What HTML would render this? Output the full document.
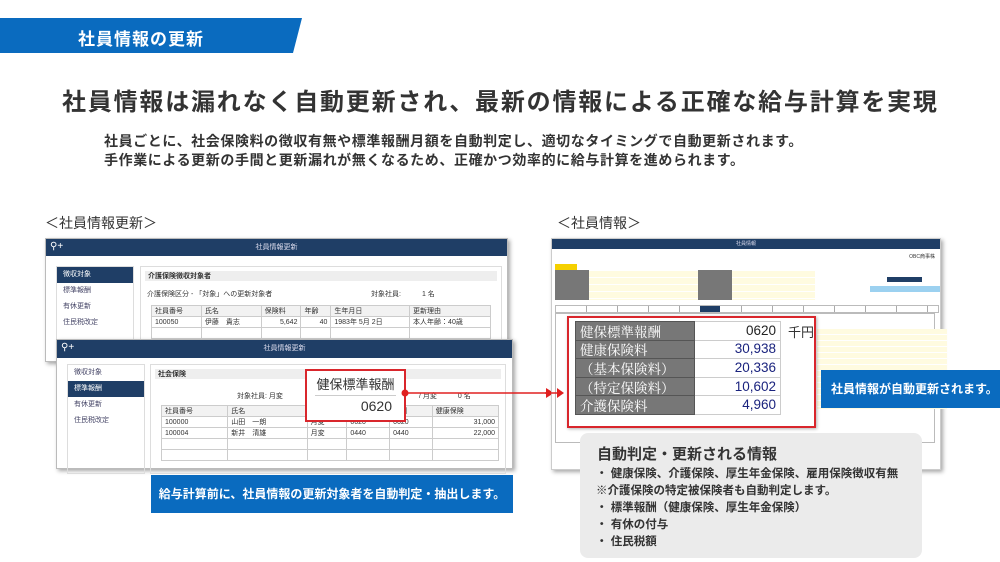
<!DOCTYPE html>
<html><head><meta charset="utf-8"><style>
*{margin:0;padding:0;box-sizing:border-box}
body{width:1000px;height:562px;background:#fff;position:relative;overflow:hidden;font-family:"Liberation Sans","Noto Sans CJK JP",sans-serif;color:#333}
.a{position:absolute;white-space:nowrap}
.win{position:absolute;background:#fff;border:1px solid #bbb;box-shadow:2px 2px 4px rgba(0,0,0,.35)}
.hb{position:absolute;left:0;right:0;top:0;background:#1f3e66;color:#dde;font-size:7px;text-align:center}
.side{position:absolute;border:1px solid #ddd;font-size:7px;color:#446}
.side div{height:16px;line-height:16px;padding-left:6px}
.side .on{background:#1f3e66;color:#fff}
.t{font-size:7px;color:#333}
.gr td{border:1px solid #ccc;font-size:7px;height:11px;padding:0 3px}
.rt td{height:18.6px;font-size:13.5px;line-height:16px;padding:0 4px;box-sizing:border-box}
.rt .l{background:#777;color:#fff;width:119px;border:1px solid #555;font-family:"Noto Serif CJK SC",serif}
.rt .v{background:#fff;text-align:right;color:#1a237e;width:86px;border:1px solid #ccc}
</style></head><body>
<svg class="a" style="left:0;top:0" width="310" height="60"><polygon points="0,18 302,18 293,53 0,53" fill="#0a6bbf"/></svg>
<div class="a" style="left:78px;top:25px;color:#fff;font-size:17px;font-weight:bold;letter-spacing:1px">社員情報の更新</div>
<div class="a" style="left:62px;top:82px;font-size:24px;font-weight:bold;letter-spacing:1.8px;color:#333">社員情報は漏れなく自動更新され、最新の情報による正確な給与計算を実現</div>
<div class="a" style="left:104px;top:132px;font-size:14px;line-height:19px;letter-spacing:0.6px;font-weight:bold;color:#333">社員ごとに、社会保険料の徴収有無や標準報酬月額を自動判定し、適切なタイミングで自動更新されます。<br>手作業による更新の手間と更新漏れが無くなるため、正確かつ効率的に給与計算を進められます。</div>
<div class="a" style="left:45px;top:213px;font-size:14px">＜社員情報更新＞</div>
<div class="a" style="left:557px;top:213px;font-size:14px">＜社員情報＞</div>

<div class="win" style="left:45px;top:238px;width:463px;height:124px">
<div class="hb" style="height:17px;line-height:17px">社員情報更新</div>
<div class="a" style="left:4px;top:2px;color:#fff;font-size:10px">⚲+</div>
<div class="side" style="left:10px;top:27px;width:78px;height:100px"><div class="on">徴収対象</div><div>標準報酬</div><div>有休更新</div><div>住民税改定</div></div>
<div class="a" style="left:94px;top:27px;width:362px;height:100px;border:1px solid #ddd">
<div style="background:#eee;margin:4px;height:10px;font-size:7px;font-weight:bold;padding-left:3px">介護保険徴収対象者</div>
<div class="a t" style="left:6px;top:22px">介護保険区分 - 「対象」への更新対象者</div><div class="a t" style="left:230px;top:22px">対象社員:　　　1 名</div>
<table class="gr a" style="left:10px;top:38px;width:340px;border-collapse:collapse"><tr style="background:#f2f2f2"><td>社員番号</td><td>氏名</td><td>保険料</td><td>年齢</td><td>生年月日</td><td>更新理由</td></tr><tr><td>100050</td><td>伊藤　貴志</td><td style="text-align:right">5,642</td><td style="text-align:right">40</td><td>1983年 5月 2日</td><td>本人年齢：40歳</td></tr><tr><td></td><td></td><td></td><td></td><td></td><td></td></tr></table>
</div></div>

<div class="win" style="left:56px;top:339px;width:457px;height:130px">
<div class="hb" style="height:18px;line-height:18px">社員情報更新</div>
<div class="a" style="left:4px;top:2px;color:#fff;font-size:10px">⚲+</div>
<div class="side" style="left:10px;top:24px;width:78px;height:110px"><div>徴収対象</div><div class="on">標準報酬</div><div>有休更新</div><div>住民税改定</div></div>
<div class="a" style="left:93px;top:24px;width:356px;height:110px;border:1px solid #ddd">
<div style="background:#eee;margin:4px;height:10px;font-size:7px;font-weight:bold;padding-left:3px">社会保険</div>
<div class="a t" style="left:86px;top:26px">対象社員: 月変</div><div class="a t" style="left:268px;top:26px">/ 月変　　　0 名</div>
<table class="gr a" style="left:10px;top:40px;width:338px;border-collapse:collapse"><tr style="background:#f2f2f2"><td>社員番号</td><td>氏名</td><td></td><td></td><td>報酬</td><td>健康保険</td></tr><tr><td>100000</td><td>山田　一朗</td><td>月変</td><td>0620</td><td>0620</td><td style="text-align:right">31,000</td></tr><tr><td>100004</td><td>新井　清雄</td><td>月変</td><td>0440</td><td>0440</td><td style="text-align:right">22,000</td></tr><tr><td></td><td></td><td></td><td></td><td></td><td></td></tr><tr><td></td><td></td><td></td><td></td><td></td><td></td></tr></table>
</div></div>
<div class="a" style="left:305px;top:369px;width:101px;height:53px;border:2px solid #d9262c;background:#fff">
<div style="margin:3px 8px 0;border-bottom:1px solid #ccc;font-size:13px;text-align:center;color:#333;height:22px;line-height:22px">健保標準報酬</div>
<div style="font-size:14px;text-align:right;padding-right:12px;line-height:20px">0620</div></div>
<svg class="a" style="left:398px;top:386px" width="160" height="16"><circle cx="7" cy="7" r="3.5" fill="#e02020"/><line x1="7" y1="7" x2="150" y2="7" stroke="#e02020" stroke-width="1.5"/><polygon points="148,2 156,7 148,12" fill="#e02020"/></svg>
<div class="a" style="left:151px;top:475px;width:362px;height:38px;background:#0a6bbf;color:#fff;font-size:12px;font-weight:bold;line-height:38px;text-align:center">給与計算前に、社員情報の更新対象者を自動判定・抽出します。</div>

<div class="win" style="left:551px;top:238px;width:390px;height:232px;border-color:#ccc">
<div class="hb" style="height:10px;line-height:10px;font-size:5px">社員情報</div>
<div class="a" style="right:5px;top:14px;font-size:5px">OBC商事株</div>
<div class="a" style="left:3px;top:25px;width:22px;height:6px;background:#f5d000"></div>
<div class="a" style="left:3px;top:31px;width:260px;height:30px;background:repeating-linear-gradient(#fff 0 1px,#fffbe0 1px 7px)"></div>
<div class="a" style="left:3px;top:31px;width:34px;height:30px;background:#777"></div>
<div class="a" style="left:146px;top:31px;width:34px;height:30px;background:#777"></div>
<div class="a" style="left:318px;top:47px;width:70px;height:6px;background:#9cd1f0"></div>
<div class="a" style="left:335px;top:38px;width:35px;height:5px;background:#1f3e66"></div>
<div class="a" style="left:3px;top:66px;width:384px;height:8px;border:1px solid #bbb;background:repeating-linear-gradient(90deg,#fff 0 30px,#aaa 30px 31px)"></div>
<div class="a" style="left:148px;top:67px;width:20px;height:6px;background:#1f3e66"></div>
<div class="a" style="left:3px;top:74px;width:380px;height:130px;border:1px solid #bbb"></div>
<div class="a" style="left:265px;top:90px;width:130px;height:80px;background:repeating-linear-gradient(#fffbe0 0 5px,#fff 5px 6px)"></div>
</div>
<div class="a" style="left:567px;top:316px;width:249px;height:112px;border:2px solid #d9262c;background:#fff;box-shadow:1px 1px 3px rgba(0,0,0,.3)">
<table class="rt a" style="left:6px;top:3px;border-collapse:collapse;table-layout:fixed;width:205px">
<tr><td class="l">健保標準報酬</td><td class="v" style="color:#222">0620</td></tr>
<tr><td class="l">健康保険料</td><td class="v">30,938</td></tr>
<tr><td class="l">（基本保険料）</td><td class="v">20,336</td></tr>
<tr><td class="l">（特定保険料）</td><td class="v">10,602</td></tr>
<tr><td class="l">介護保険料</td><td class="v">4,960</td></tr></table>
<div class="a" style="left:219px;top:4px;font-size:13px">千円</div></div>
<svg class="a" style="left:545px;top:386px" width="20" height="16"><line x1="0" y1="7" x2="14" y2="7" stroke="#e02020" stroke-width="1.5"/><polygon points="12,2 19,7 12,12" fill="#e02020"/></svg>
<div class="a" style="left:821px;top:370px;width:179px;height:38px;background:#0a6bbf;color:#fff;font-size:12px;font-weight:bold;line-height:38px;padding-left:10px">社員情報が自動更新されます。</div>
<div class="a" style="left:580px;top:433px;width:342px;height:125px;background:#ebebeb;border-radius:8px"></div>
<div class="a" style="left:597px;top:443px;font-size:15px;font-weight:bold;color:#333">自動判定・更新される情報</div>
<div class="a" style="left:596px;top:466px;font-size:11.5px;line-height:17px;font-weight:bold;color:#333">・ 健康保険、介護保険、厚生年金保険、雇用保険徴収有無<br>※介護保険の特定被保険者も自動判定します。<br>・ 標準報酬（健康保険、厚生年金保険）<br>・ 有休の付与<br>・ 住民税額</div>
</body></html>
